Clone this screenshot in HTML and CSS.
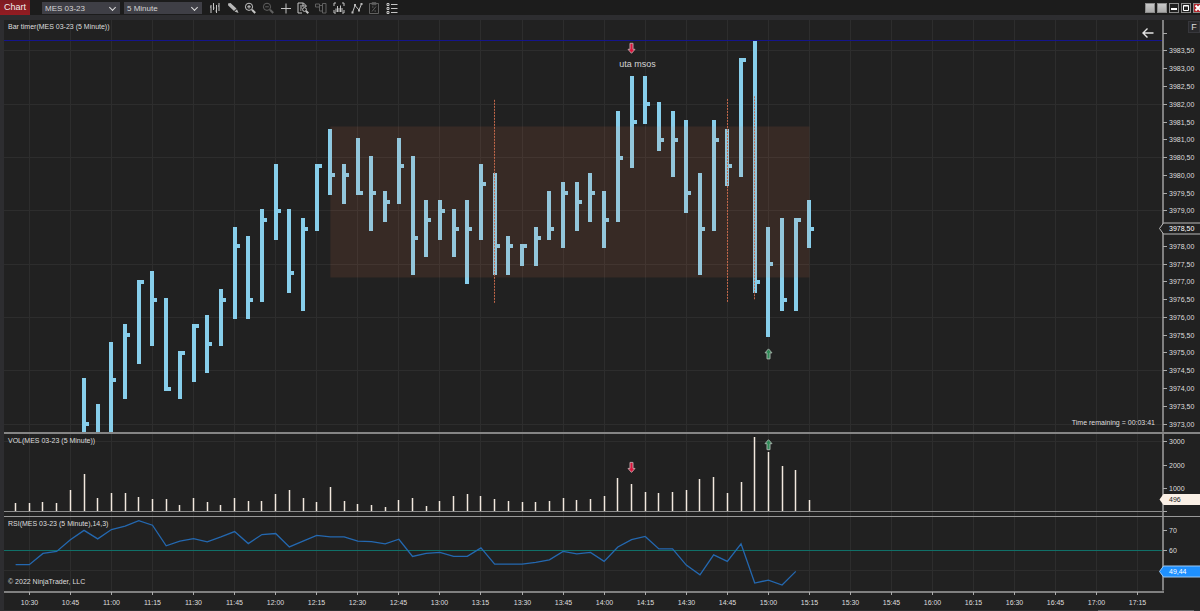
FILE: index.html
```html
<!DOCTYPE html>
<html lang="en">
<head>
<meta charset="utf-8">
<title>Chart - MES 03-23</title>
<link rel="stylesheet" href="styles.css">
</head>
<body>
<div class="window">
  <header class="titlebar">
    <h1 class="title">Chart</h1>
    <div class="selectors">
      <span class="picker"><select aria-label="Instrument"><option>MES 03-23</option></select></span>
      <span class="picker"><select aria-label="Interval"><option>5 Minute</option></select></span>
    </div>
    <div class="tools">
      <button aria-label="Chart style"><svg viewBox="0 0 12 12"><path d="M2 3v8M1 5h1M4.500 1v7M4.500 6h1M7.500 3v8M6.500 9h1M10 1v8M9 4h1"/></svg></button>
      <button aria-label="Drawing tools"><svg viewBox="0 0 12 12"><path class="solid" d="M1 1.500 3.500 1 9.500 6.500 7 9 1.200 3.500zM10 7.200 11.500 11 7.600 9.600z"/></svg></button>
      <button aria-label="Zoom in"><svg viewBox="0 0 12 12"><circle cx="5" cy="4.800" r="3.600"/><path d="M3.200 4.800h3.600M5 3v3.600"/><path class="thick" d="m8 7.700 3.200 3.300"/></svg></button>
      <button aria-label="Zoom out" class="dim"><svg viewBox="0 0 12 12"><circle cx="5" cy="4.800" r="3.600"/><path d="M3.200 4.800h3.600"/><path class="thick" d="m8 7.700 3.200 3.300"/></svg></button>
      <button aria-label="Crosshair"><svg viewBox="0 0 12 12"><path d="M6 1.500v10M1 6.500h10"/></svg></button>
      <button aria-label="Data box"><svg viewBox="0 0 12 12"><path d="M5 11H1V1h5.500L9 3.500V5M3 4h3M3 6h2M3 8h1.500M6 1v3h3"/><circle cx="7.500" cy="7.500" r="1.900"/><path class="thick" d="m9 9 2.300 2.200"/></svg></button>
      <button aria-label="Chart trader" class="dim"><svg viewBox="0 0 12 12"><path d="M.500 2h4v3h-4zM4.500 3.500h3M7.500 1.500h3.500v9.500H7.500zM4.500 5v4h3"/></svg></button>
      <button aria-label="Indicators"><svg viewBox="0 0 12 12"><path d="M1 4V1h2M9 1h2v3M1 8v3h2M9 11h2V8"/><path d="M3 10V6.500M4.500 10V4M6 10V6M7.500 10V3.500M9 10V6"/></svg></button>
      <button aria-label="Strategies"><svg viewBox="0 0 12 12"><path d="m1.500 10.500 2.500-7 4 4.500 2.500-6"/><path class="solid" d="M.500 9.500h2v2h-2zM3 2h2v2H3zM7 7.500h2v2H7zM9.500 1h2v2h-2z"/></svg></button>
      <button aria-label="Playback" class="dim"><svg viewBox="0 0 12 12"><path d="M1.500 1.500h9v10h-9zM4 .700h4v2H4zM4 9.500l4-5M4 5h1.500M6.500 9H8"/></svg></button>
      <button aria-label="Properties"><svg viewBox="0 0 12 12"><path d="M5 2.500h6.500M5 6.500h6.500M5 10.500h6.500M1 1.500h2v2H1zM1 5.500h2v2H1zM1 9.500h2v2H1z"/></svg></button>
    </div>
    <div class="controls">
      <button aria-label="Link instrument"></button>
      <button aria-label="Link interval"></button>
      <button aria-label="Minimize" class="dark"><svg viewBox="0 0 8 8"><path d="M1 5h6"/></svg></button>
      <button aria-label="Maximize" class="dark"><svg viewBox="0 0 8 8"><path class="fine" d="M1.500 1.500h5v5h-5zM1.500 2h5"/></svg></button>
      <button aria-label="Close" class="close"><svg viewBox="0 0 8 8"><path d="m1.500 1.500 5 5M6.500 1.500l-5 5"/></svg></button>
    </div>
  </header>
  <main class="charts">
    <section class="panel price" aria-label="Price">
      <svg id="price"></svg>
      <p class="caption">Bar timer(MES 03-23 (5 Minute))</p>
      <p class="timer">Time remaining = 00:03:41</p>
      <button class="back" aria-label="Scroll to last bar"><svg viewBox="0 0 12 10"><path d="M11.500 5H1M5.500 .500 1 5l4.500 4.500"/></svg></button>
      <button class="fixed">F</button>
    </section>
    <section class="panel volume" aria-label="Volume">
      <svg id="volume"></svg>
      <p class="caption">VOL(MES 03-23 (5 Minute))</p>
    </section>
    <section class="panel rsi" aria-label="RSI">
      <svg id="rsi"></svg>
      <p class="caption">RSI(MES 03-23 (5 Minute),14,3)</p>
      <p class="copyright">© 2022 NinjaTrader, LLC</p>
    </section>
    <section class="panel times" aria-label="Time axis">
      <svg id="times"></svg>
    </section>
  </main>
  <div class="scroll"><div class="thumb"></div></div>
</div>
<script src="chart.js"></script>
</body>
</html>
```
FILE: styles.css
```css
* { box-sizing: border-box; }
body {
  margin: 0;
  background: #2d2d30;
  color: #dedede;
  font-family: "Liberation Sans", Arial, sans-serif;
  font-size: 7px;
}
h1, p { margin: 0; font-weight: normal; }
button { padding: 0; border: 0; background: none; color: inherit; font: inherit; }
button svg { display: block; width: 100%; height: 100%; }
.window { display: flex; flex-direction: column; height: 100vh; overflow: hidden; }
.titlebar {
  display: flex;
  align-items: center;
  flex: none;
  height: 15px;
  background: #1c1c1c;
}
.title {
  width: 30px;
  height: 15px;
  background: linear-gradient(#7d1b22, #931c22);
  color: #eee;
  font-size: 9px;
  line-height: 15px;
  text-align: center;
}
.selectors { display: flex; gap: 4px; margin-left: 12px; }
.picker { position: relative; display: block; width: 78px; height: 12px; background: #3f3f46; }
.picker::after {
  content: "";
  position: absolute;
  right: 5px;
  top: 3px;
  width: 4px;
  height: 4px;
  border: solid #ddd;
  border-width: 0 1px 1px 0;
  transform: rotate(45deg);
}
.picker select {
  display: block;
  appearance: none;
  width: 100%;
  height: 12px;
  padding: 1px 3px 0;
  border: 0;
  background: none;
  color: #d4d4d4;
  font: 8px/11px "Liberation Sans", Arial, sans-serif;
}
.tools { display: flex; justify-content: space-between; width: 189px; margin-left: 7px; }
.tools button { width: 12px; height: 12px; }
.tools svg { fill: none; stroke: #c4c4c4; stroke-width: 1; }
.tools .dim svg { stroke: #606060; }
.tools .solid { fill: #b8b8b8; stroke: none; }
.tools .thick { stroke-width: 2; }
.controls { display: flex; gap: 2px; margin: 0 -3px 0 auto; }
.controls button { width: 10px; height: 10px; border: 1px solid #8c8c8c; background: linear-gradient(#c9c9c9, #a9a9a9); }
.controls svg { fill: none; stroke: #fff; stroke-width: 2; }
.controls .fine { stroke-width: 1; }
.controls .dark { background: #202020; }
.controls .close { background: #b3262c; }
.charts {
  display: flex;
  flex-direction: column;
  flex: 1;
  min-height: 0;
  margin: 5px 0 0 4px;
  background: #212121;
}
.panel { position: relative; min-height: 0; }
.panel > svg { display: block; position: absolute; width: 100%; height: 100%; }
.price { flex: 414; border-bottom: 2px solid #858585; }
.volume { flex: 83; border-bottom: 1px solid #999; }
.rsi { flex: 74; }
.times { flex: none; height: 19px; }
.caption, .copyright, .timer { position: absolute; left: 4px; line-height: 8px; }
.caption { top: 3px; }
.copyright { bottom: 5px; }
.timer { left: auto; right: 45px; bottom: 5px; }
.back { position: absolute; top: 8px; right: 46px; width: 12px; height: 10px; }
.back svg { fill: none; stroke: #e4e4e4; stroke-width: 1.4; }
.fixed {
  position: absolute;
  top: 1px;
  right: 0;
  width: 12px;
  height: 12px;
  border: 1px solid #37373c;
  background: #29292c;
  font-size: 9px;
  line-height: 10px;
}
.scroll { display: flex; justify-content: flex-end; flex: none; height: 1px; padding-right: 6px; background: #2d2d30; }
.thumb { width: 8%; background: #68686c; }

.grid { stroke: #2d2d2d; }
.axis { stroke: #808080; stroke-width: 2; }
.tick { stroke: #aaa; }
.label { fill: #dedede; font-size: 7px; }
.centered { text-anchor: middle; }
.note { fill: #d4d4d4; font-size: 9px; text-anchor: middle; }
.bar { fill: #87ceeb; }
.zone { fill: #ff7f50; opacity: 0.1; }
.level { stroke: #14148c; }
.session { stroke: #c4684a; stroke-dasharray: 2 1; }
.volbar { stroke: #f2e8de; stroke-width: 1.5; }
.base { stroke: #8c8c8c; }
.mid { stroke: #107068; }
.line { fill: none; stroke: #2468b0; stroke-width: 1.3; }
.up { fill: #2e8b57; stroke: #a0b0a6; }
.down { fill: #dc143c; stroke: #c09ca2; }
.tag-price { fill: #212121; stroke: #bbb; }
.tag-volume { fill: #faf0e6; }
.tag-rsi { fill: #1e90ff; stroke: #9ac8f4; }
.tag-text { fill: #fff; font-size: 7px; }
.dark-text { fill: #222; }
```
FILE: chart.js
```js
const AXIS_WIDTH = 37;
const BAR_STEP = 13.687;
const FIRST_X = 25.3;
const TOP_PRICE = 3983.5;
const TICK = 0.25;

// [high, low, close] in quarter-point ticks below TOP_PRICE, from 10:50 on
const bars = [
  [37,44,42],[40,45,45],[33,44,37],[31,39,32],[26,35,26],[25,33,28],[28,38,38],[34,39,34],
  [31,37,31],[30,36,33],[27,33,28],[20,30,22],[21,30,28],[18,28,19],[13,21,18],[18,27,25],
  [19,29,20],[13,20,13],[9,16,14],[13,17,14],[10,16,16],[12,20,16],[16,19,17],[10,17,13],
  [12,25,21],[17,23,19],[17,21,18],[18,23,20],[17,26,20],[13,21,15],[14,25,22],[21,25,22],
  [22,24,22],[20,24,21],[16,21,20],[15,22,16],[15,20,17],[14,19,16],[16,22,19],[7,19,12],
  [3,13,8],[3,8,6],[6,11,10],[7,14,10],[8,18,16],[14,25,20],[8,20,10],[9,15,13],
  [1,14,1],[-1,27,26],[20,32,24],[19,29,28],[19,29,19],[17,22,20]
];

const volumes = [
  360,360,430,360,925,1620,565,780,780,620,520,535,275,590,405,275,565,450,460,740,925,
  565,405,1040,460,320,290,200,490,590,230,435,650,740,650,520,450,405,405,450,565,490,
  535,650,1446,1170,840,780,840,925,1390,1490,780,1270,3210,2575,1970,1780,496
];

const rsi = [
  52.8,52.8,58.5,59.5,65.4,70.2,65.9,70.6,72.4,75.1,72.8,62.4,64.7,66,64.4,66.9,69.6,63.5,
  68.1,68.6,61.8,64.7,67.7,66.9,66.9,64.7,64.5,63.4,65.7,57,58.5,59,57,57,61.3,53.1,53.1,
  53.1,54,55.3,59.5,58.3,59,54.5,61.8,65.5,67.1,60.8,60.8,52.6,47.7,57.8,54.5,63.4,43.5,
  45,42.5,49.4
];

const xOf = i => FIRST_X + i * BAR_STEP;
const crisp = v => Math.floor(v) + 0.5;

function line(x1, y1, x2, y2, cls) {
  return `<line x1="${x1}" y1="${y1}" x2="${x2}" y2="${y2}" class="${cls}"/>`;
}
function rect(x, y, w, h, cls) {
  return `<rect x="${x}" y="${y}" width="${w}" height="${h}" class="${cls}"/>`;
}
function text(x, y, value, cls) {
  return `<text x="${x}" y="${y}" class="${cls}">${value}</text>`;
}
function arrow(x, y, dir) {
  const s = dir === 'up' ? 1 : -1;
  return `<path class="${dir}" d="M${x} ${y - 5 * s}l3.500 ${4 * s}h-2v${6 * s}h-3v${-6 * s}h-2z"/>`;
}
function tag(right, y, value, cls, textCls) {
  return `<path class="${cls}" d="M${right - 3.500} ${y}l4-5.500H${right + 40}v11H${right + 0.500}z"/>` +
    text(right + 6, Math.round(y + 2), value, 'tag-text ' + textCls);
}
function verticals(right, h) {
  let out = '';
  for (let i = 0; xOf(i) < right; i += 3) out += line(crisp(xOf(i)), 0, crisp(xOf(i)), h, 'grid');
  return out;
}
function yTick(right, y, value) {
  return line(right, y, right + 4, y, 'tick') + text(right + 6, Math.round(y + 2), value, 'label');
}
function setup(id) {
  const svg = document.getElementById(id);
  const { width, height } = svg.getBoundingClientRect();
  return { svg, h: height, right: width - AXIS_WIDTH };
}

function drawPrice() {
  const { svg, h, right } = setup('price');
  const step = h * 0.02157;
  const top = h * 0.0752;
  const y = t => top + t * step;
  let out = verticals(right, h);
  for (let t = 0; t <= 42; t += 6) out += line(0, crisp(y(t)), right, crisp(y(t)), 'grid');
  bars.forEach(([hi, lo, close], n) => {
    const x = Math.round(xOf(n + 4)) - 2;
    const yTop = Math.round(y(hi) - 2);
    out += rect(x, yTop, 4, Math.round(y(lo) + 2) - yTop, 'bar');
    out += rect(x + 4, Math.round(y(close) - 2), 3, 4, 'bar');
  });
  out += rect(xOf(22), y(8.5), xOf(57) - xOf(22), y(25.5) - y(8.5), 'zone');
  out += line(0, crisp(y(-1.2)), right, crisp(y(-1.2)), 'level');
  [[34, 5.5, 28.4], [51, 5.4, 28.3], [53, 5.1, 28]].forEach(([i, a, b]) => {
    out += line(crisp(xOf(i)), y(a), crisp(xOf(i)), y(b), 'session');
  });
  out += arrow(crisp(xOf(44)), y(-0.3), 'down') + arrow(crisp(xOf(54)), y(34.1), 'up');
  out += text(crisp(xOf(44)) + 6, Math.round(y(1.85)), 'uta msos', 'note');
  out += line(right, 0, right, h, 'axis');
  for (let t = -2; t <= 42; t += 2) {
    const value = t < 0 ? '' : (TOP_PRICE - t * TICK).toFixed(2).replace('.', ',');
    if (t !== 20) out += yTick(right, crisp(y(t)), value);
  }
  out += tag(right, crisp(y(20)), '3978,50', 'tag-price', '');
  svg.innerHTML = out;
}

function drawVolume() {
  const { svg, h, right } = setup('volume');
  const base = crisp(h * 0.94);
  const y = v => base - v * h * 0.000281;
  let out = verticals(right, h);
  out += line(0, crisp(y(3000)), right, crisp(y(3000)), 'grid');
  volumes.forEach((v, n) => {
    const x = crisp(xOf(n - 1));
    out += line(x, Math.round(y(v)), x, base, 'volbar');
  });
  out += line(0, base, right, base, 'base');
  out += arrow(crisp(xOf(44)), y(1900), 'down') + arrow(crisp(xOf(54)), y(2880), 'up');
  out += line(right, 0, right, h, 'axis');
  [3000, 2000, 1000].forEach(v => { out += yTick(right, crisp(y(v)), v); });
  out += yTick(right, base, '');
  out += tag(right, crisp(y(496)), '496', 'tag-volume', 'dark-text');
  svg.innerHTML = out;
}

function drawRsi() {
  const { svg, h, right } = setup('rsi');
  const y = v => h * 0.455 - (v - 60) * h * 0.0268;
  let out = verticals(right, h);
  out += line(0, crisp(y(50)), right, crisp(y(50)), 'grid');
  out += line(0, crisp(y(60)), right, crisp(y(60)), 'mid');
  out += `<polyline class="line" points="${rsi.map((v, n) => xOf(n - 1) + ',' + y(v)).join(' ')}"/>`;
  out += line(right, 0, right, h, 'axis');
  out += yTick(right, crisp(y(70)), '70') + yTick(right, crisp(y(60)), '60');
  out += tag(right, crisp(y(49.2)), '49,44', 'tag-rsi', '');
  svg.innerHTML = out;
}

function drawTimes() {
  const { svg, right } = setup('times');
  let out = line(0, 1, right + 1, 1, 'axis');
  for (let i = 0; xOf(i) < right; i += 3) {
    const minutes = 630 + i * 5;
    const label = Math.floor(minutes / 60) + ':' + String(minutes % 60).padStart(2, '0');
    out += line(crisp(xOf(i)), 1, crisp(xOf(i)), 4, 'tick');
    out += text(crisp(xOf(i)), 14, label, 'label centered');
  }
  svg.innerHTML = out;
}

function draw() {
  drawPrice();
  drawVolume();
  drawRsi();
  drawTimes();
}

draw();
window.addEventListener('resize', draw);
```
